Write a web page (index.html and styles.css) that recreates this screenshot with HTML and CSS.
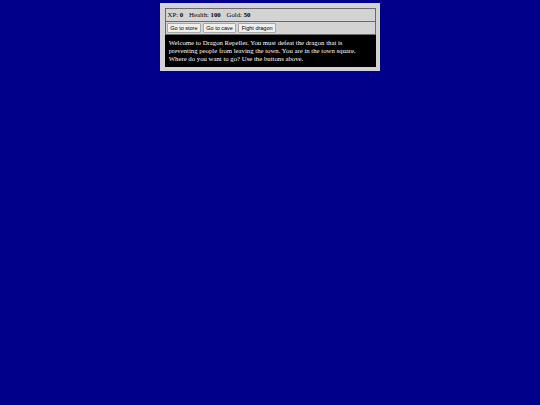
FILE: index.html
```html
<!DOCTYPE html>
<html lang="en">
<head>
<meta charset="utf-8">
<title>RPG - Dragon Repeller</title>
<link rel="stylesheet" href="styles.css">
</head>
<body>
<div class="game">
  <div class="stats">
    <span class="stat">XP: <strong>0</strong></span>
    <span class="stat">Health: <strong>100</strong></span>
    <span class="stat">Gold: <strong>50</strong></span>
  </div>
  <div class="controls">
    <button class="btn">Go to store</button>
    <button class="btn">Go to cave</button>
    <button class="btn">Fight dragon</button>
  </div>
  <div class="text">Welcome to Dragon Repeller. You must defeat the dragon that is preventing people from leaving the town. You are in the town square. Where do you want to go? Use the buttons above.</div>
</div>
</body>
</html>
```
FILE: styles.css
```css
html, body {
  background-color: #00008b;
}
body {
  margin: 3.4px;
  font-family: "Liberation Serif", "Times New Roman", serif;
  font-size: 6.75px;
}
.game {
  max-width: 211px;
  margin: 0 auto;
  padding: 4.2px;
  background-color: #d3d3d3;
  color: #fff;
}
.stats,
.controls {
  border: 1px solid #6a6a6a;
  color: #000;
  padding: 2.1px;
}
.stats {
  border-bottom: none;
  line-height: 8.4px;
}
.controls {
  display: flex;
  gap: 2.4px;
  padding: 1.1px 1.6px;
}
.stat {
  padding-right: 4.2px;
}
.btn {
  font-family: "Liberation Sans", Arial, sans-serif;
  font-size: 5.5px;
  line-height: 6.4px;
  padding: 0.5px 2.2px;
  margin: 0;
  background-color: #efefef;
  color: #000;
  border: 1px solid #a8a8a8;
  border-radius: 1px;
}
.text {
  background-color: #000;
  color: #fff;
  padding: 4.2px;
  line-height: 7.8px;
}
```
